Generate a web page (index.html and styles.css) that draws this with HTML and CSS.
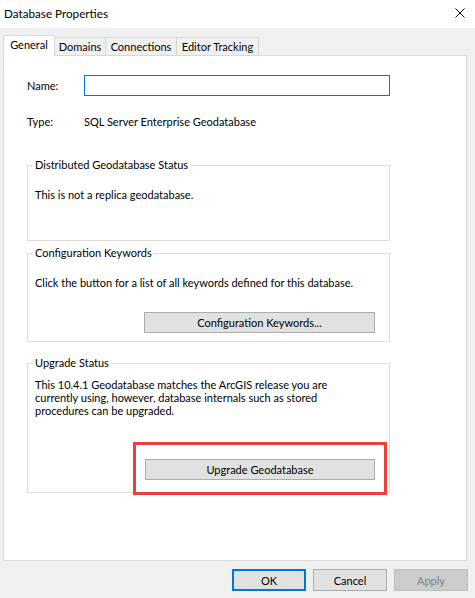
FILE: index.html
```html
<!DOCTYPE html>
<html lang="en">
<head>
  <meta charset="UTF-8">
  <title>Database Properties</title>
  <link rel="stylesheet" href="styles.css">
</head>
<body>
  <div class="dialog">
    <div class="titlebar">
      <span class="title">Database Properties</span>
      <svg class="close" width="10" height="10" viewBox="0 0 10 10">
        <path d="M0.5 0.5 L9.5 9.5 M9.5 0.5 L0.5 9.5" stroke="#000" stroke-width="1" fill="none"/>
      </svg>
    </div>
    <div class="content">
      <div class="tabs">
        <div class="tab active">General</div>
        <div class="tab">Domains</div>
        <div class="tab">Connections</div>
        <div class="tab">Editor Tracking</div>
      </div>
      <div class="panel">
        <div class="row row-name">
          <span class="label">Name:</span>
          <input class="name-input" type="text">
        </div>
        <div class="row row-type">
          <span class="label">Type:</span>
          <span>SQL Server Enterprise Geodatabase</span>
        </div>

        <fieldset class="group group-replica">
          <legend>Distributed Geodatabase Status</legend>
          <p class="group-text">This is not a replica geodatabase.</p>
        </fieldset>

        <fieldset class="group group-keywords">
          <legend>Configuration Keywords</legend>
          <p class="group-text">Click the button for a list of all keywords defined for this database.</p>
          <button class="btn btn-wide btn-keywords">Configuration Keywords...</button>
        </fieldset>

        <fieldset class="group group-upgrade">
          <legend>Upgrade Status</legend>
          <p class="group-text upgrade-text">This 10.4.1 Geodatabase matches the ArcGIS release you are<br>currently using, however, database internals such as stored<br>procedures can be upgraded.</p>
          <button class="btn btn-wide btn-upgrade">Upgrade Geodatabase</button>
          <div class="highlight"></div>
        </fieldset>
      </div>
      <div class="actions">
        <button class="btn btn-action btn-default">OK</button>
        <button class="btn btn-action">Cancel</button>
        <button class="btn btn-action" disabled>Apply</button>
      </div>
    </div>
  </div>
</body>
</html>
```

FILE: styles.css
```css
/* Base */
* {
  margin: 0;
  padding: 0;
  box-sizing: border-box;
}
body {
  font-family: Lato, "Liberation Sans", sans-serif;
  font-size: 11px;
  color: #000;
  background: #f0f0f0;
  white-space: nowrap;
}
.dialog {
  width: 475px;
  height: 598px;
  display: flex;
  flex-direction: column;
}

/* Title bar */
.titlebar {
  height: 28px;
  background: #ffffff;
  display: flex;
  align-items: center;
  justify-content: space-between;
  padding: 0 10px 3px 4px;
}
.title {
  font-size: 11.7px;
}
.close {
  display: block;
}

/* Tabs */
.content {
  padding: 7px 8px 0 3px;
}
.tabs {
  display: flex;
  align-items: flex-end;
  height: 21px;
  margin-bottom: -1px;
  position: relative;
  z-index: 1;
}
.tab {
  height: 19px;
  line-height: 18px;
  text-align: center;
  border: 1px solid #d9d9d9;
  margin-left: -1px;
  background: #f0f0f0;
}
.tab:first-child {
  margin-left: 0;
}
.tab.active {
  height: 21px;
  line-height: 18px;
  background: #ffffff;
  border-bottom: none;
}
.tab:nth-child(1) { width: 52px; }
.tab:nth-child(2) { width: 52px; }
.tab:nth-child(3) { width: 72px; }
.tab:nth-child(4) { width: 83px; }

/* Page */
.panel {
  height: 506px;
  background: #ffffff;
  border: 1px solid #d9d9d9;
  padding: 0 0 0 23px;
}
.row {
  display: flex;
  align-items: center;
  width: 363px;
}
.label {
  width: 57px;
  flex-shrink: 0;
}
.row-name {
  margin-top: 19px;
}
.row-type {
  margin-top: 19px;
  line-height: 14px;
}
.name-input {
  width: 306px;
  height: 21px;
  border: 1px solid #0078d7;
  outline: none;
  font: inherit;
  padding: 0 3px;
}

/* Group boxes */
.group {
  width: 363px;
  border: 1px solid #dcdcdc;
  padding: 0 7px;
  position: relative;
}
.group legend {
  line-height: 14px;
  padding: 0 2px;
  margin-left: -2px;
}
.group-text {
  line-height: 13px;
  margin-top: 16px;
}
.group-replica {
  height: 83px;
  margin-top: 29px;
}
.group-keywords {
  height: 96px;
  margin-top: 5px;
}
.group-upgrade {
  height: 137px;
  margin-top: 14px;
}
.upgrade-text {
  margin-top: 8px;
}

/* Buttons */
.btn {
  display: block;
  font: inherit;
  color: #000;
  background: #e1e1e1;
  border: 1px solid #adadad;
  height: 21px;
}
.btn-wide {
  width: 231px;
  margin-left: 109px;
}
.btn-keywords {
  margin-top: 23px;
}
.btn-upgrade {
  margin-top: 42px;
  margin-left: 110px;
  width: 230px;
}

/* Red callout round the upgrade button */
.highlight {
  position: absolute;
  left: 105px;
  top: 72px;
  width: 254px;
  height: 53px;
  border: 3px solid #e8413e;
}

/* Dialog buttons */
.actions {
  display: flex;
  justify-content: flex-end;
  gap: 7px;
  margin-top: 8px;
  margin-right: -1px;
}
.btn-action {
  width: 74px;
  height: 22px;
}
.btn-default {
  border: 2px solid #0078d7;
}
.btn-action:disabled {
  background: #cccccc;
  border-color: #bfbfbf;
  color: #838383;
}
```
